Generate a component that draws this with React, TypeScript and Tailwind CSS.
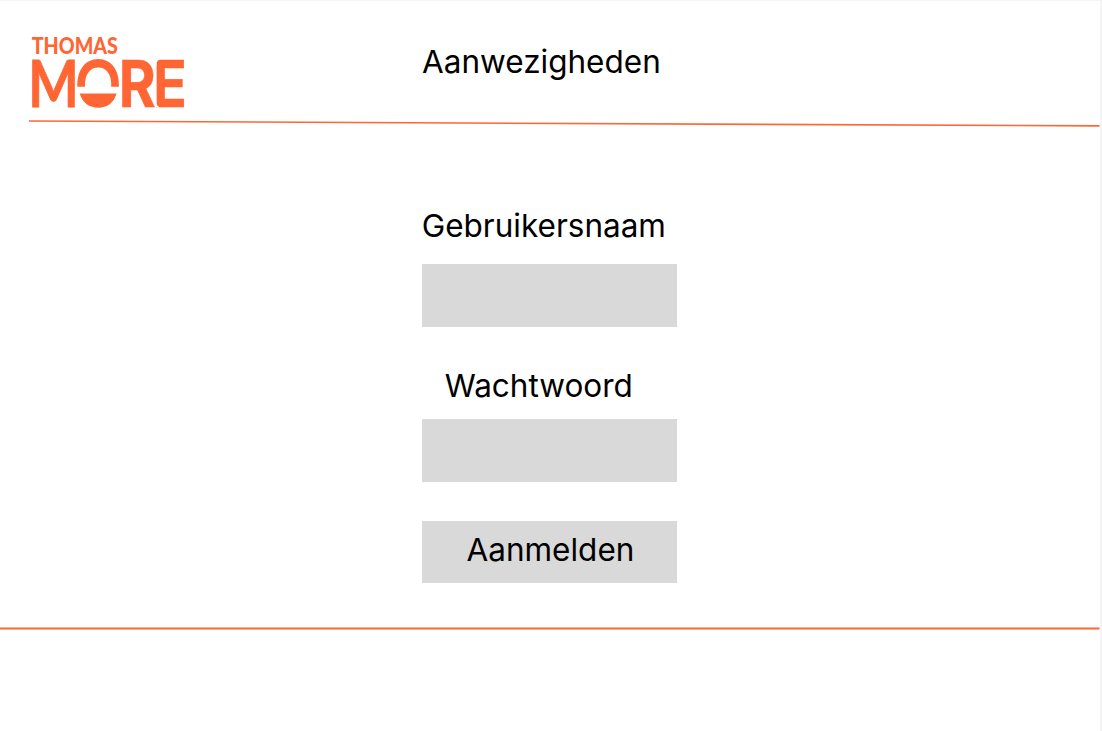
import React from "react";

function Logo() {
  return (
    <svg
      className="mt-[29px] ml-[22px] h-[86px] w-[172px] shrink-0 overflow-visible"
      viewBox="22 30 172 86"
      fill="#ff6633"
      fontFamily="Lato, sans-serif"
      fontWeight="700"
      role="img"
    >
      <text x="31.8" y="53.6" fontSize="22" fontWeight="900" textLength="86" lengthAdjust="spacingAndGlyphs">
        THOMAS
      </text>
      <text x="28.2" y="106.5" fontSize="64.5" textLength="50.4" lengthAdjust="spacingAndGlyphs" stroke="#ff6633" strokeWidth="0.8">
        M
      </text>
      <g fontSize="64" fontFamily="Inter, sans-serif" stroke="#ff6633" strokeWidth="0.5">
        <text x="118.8" y="106.7" textLength="37" lengthAdjust="spacingAndGlyphs">
          R
        </text>
        <text x="152.6" y="106.7" textLength="34.4" lengthAdjust="spacingAndGlyphs">
          E
        </text>
      </g>
      <path d="M155 59H160.5Q156.6 60 156.6 64.5V102.5Q156.6 106.3 160.5 107.5H155.6Z" fill="#fff" />
      <path d="M77.4 86.7C76.8 70 85.5 59 98.2 59S119.6 70 118.9 86.7H111.2C112 75 106.8 67.6 98.2 67.6S84.4 75 85 86.7Z" />
      <path d="M79.7 93.5H116.6C113.8 102.8 107.2 107.8 98.2 107.8S82.5 102.8 79.7 93.5Z" />
    </svg>
  );
}

export default function App() {
  return (
    <div className="h-[731px] w-[1102px] overflow-hidden bg-[#f5f5f5] pt-px font-['Inter',sans-serif] text-[31.5px] leading-[39px] text-black">
      <div className="flex h-[730px] w-[1099.5px] flex-col bg-white">
        <header className="flex h-[118px] shrink-0 items-start">
          <Logo />
          <h1 className="mt-[40.5px] ml-[228px] whitespace-nowrap">Aanwezigheden</h1>
        </header>
        <svg className="ml-[29px] h-[9px] w-[1070.5px] shrink-0" viewBox="0 0 1070.5 9">
          <line x1="0" y1="2" x2="1070.5" y2="6.9" stroke="#ff6633" strokeWidth="1.6" />
        </svg>
        <form className="ml-[421.7px] flex h-[499px] w-[255.8px] shrink-0 flex-col pt-[77.5px]">
          <label htmlFor="user" className="whitespace-nowrap">Gebruikersnaam</label>
          <input id="user" className="mt-[19.7px] h-[62.5px] w-full shrink-0 bg-[#d9d9d9] px-3 outline-none" />
          <label htmlFor="password" className="mt-[39.3px] ml-[23px] whitespace-nowrap">Wachtwoord</label>
          <input
            id="password"
            type="password"
            className="mt-[14.4px] h-[62.5px] w-full shrink-0 bg-[#d9d9d9] px-3 outline-none"
          />
          <button
            type="button"
            className="mt-[38.8px] flex h-[62.4px] w-full shrink-0 items-start bg-[#d9d9d9] pt-[9.4px] pl-[44.8px] whitespace-nowrap"
          >
            Aanmelden
          </button>
        </form>
        <svg className="h-[3px] w-full shrink-0" viewBox="0 0 1099.5 3" preserveAspectRatio="none">
          <line x1="0" y1="1.5" x2="1099.5" y2="1.5" stroke="#ff6633" strokeWidth="1.8" />
        </svg>
      </div>
    </div>
  );
}
